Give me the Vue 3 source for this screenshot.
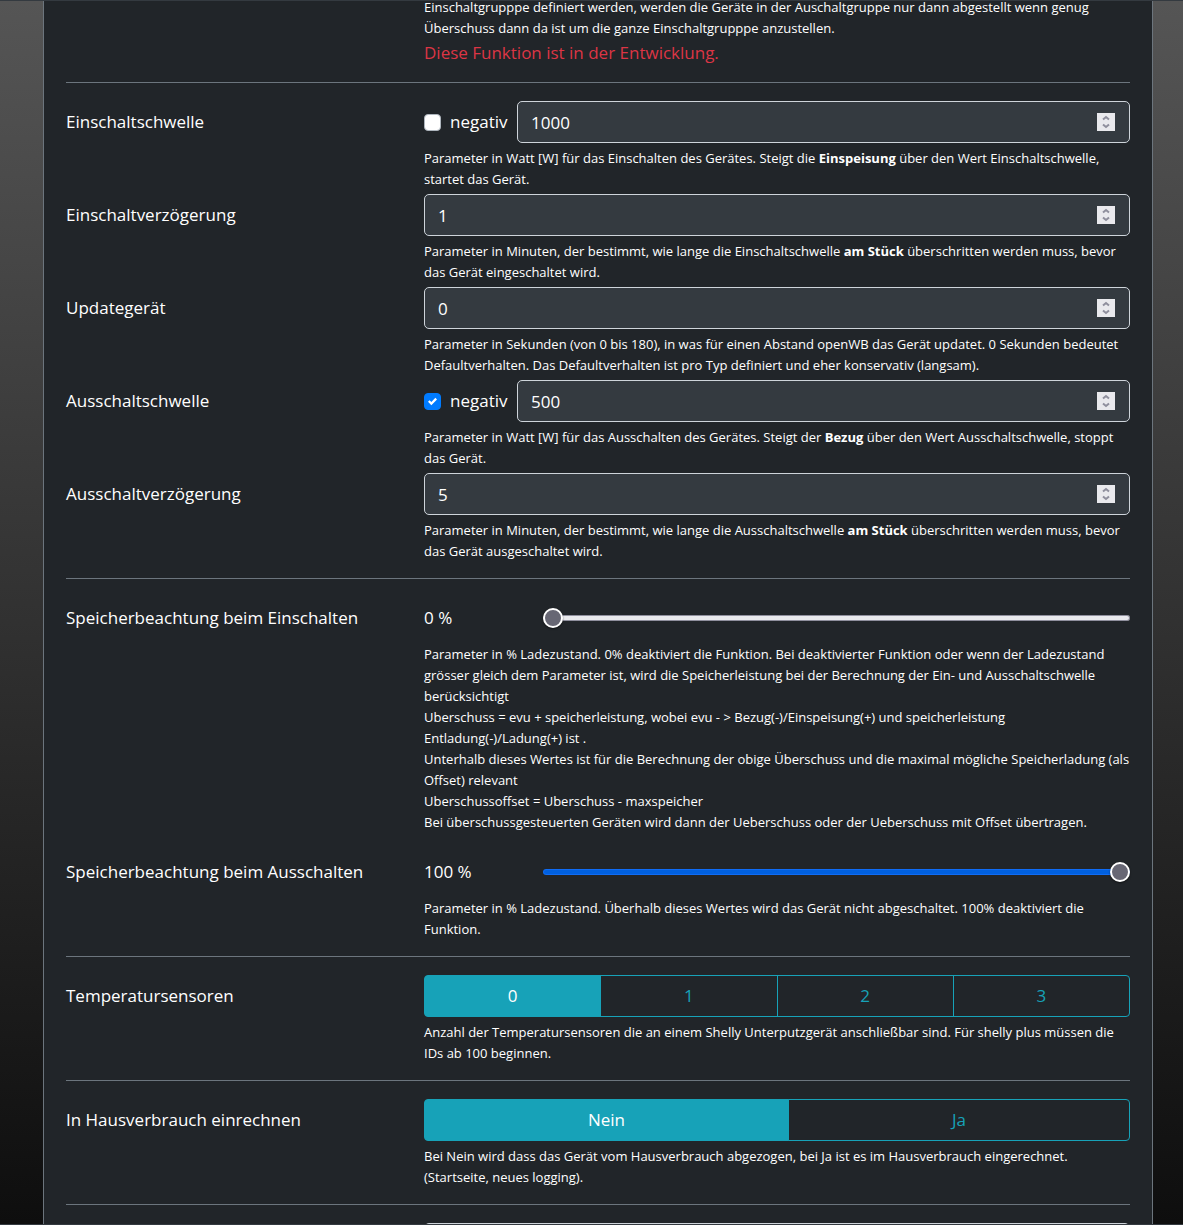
<script setup>
import { reactive } from 'vue'

const thresholds = reactive([
  {
    id: 'on-threshold', label: 'Einschaltschwelle', value: 1000, sign: true, negative: false,
    help: 'Parameter in Watt [W] für das Einschalten des Gerätes. Steigt die <b>Einspeisung</b> über den Wert Einschaltschwelle,<br>startet das Gerät.'
  },
  {
    id: 'on-delay', label: 'Einschaltverzögerung', value: 1, sign: false,
    help: 'Parameter in Minuten, der bestimmt, wie lange die Einschaltschwelle <b>am Stück</b> überschritten werden muss, bevor<br>das Gerät eingeschaltet wird.'
  },
  {
    id: 'update', label: 'Updategerät', value: 0, sign: false,
    help: 'Parameter in Sekunden (von 0 bis 180), in was für einen Abstand openWB das Gerät updatet. 0 Sekunden bedeutet<br>Defaultverhalten. Das Defaultverhalten ist pro Typ definiert und eher konservativ (langsam).'
  },
  {
    id: 'off-threshold', label: 'Ausschaltschwelle', value: 500, sign: true, negative: true,
    help: 'Parameter in Watt [W] für das Ausschalten des Gerätes. Steigt der <b>Bezug</b> über den Wert Ausschaltschwelle, stoppt<br>das Gerät.'
  },
  {
    id: 'off-delay', label: 'Ausschaltverzögerung', value: 5, sign: false,
    help: 'Parameter in Minuten, der bestimmt, wie lange die Ausschaltschwelle <b>am Stück</b> überschritten werden muss, bevor<br>das Gerät ausgeschaltet wird.'
  }
])

const storage = reactive([
  {
    id: 'soc-on', label: 'Speicherbeachtung beim Einschalten', value: 0,
    help: 'Parameter in % Ladezustand. 0% deaktiviert die Funktion. Bei deaktivierter Funktion oder wenn der Ladezustand<br>grösser gleich dem Parameter ist, wird die Speicherleistung bei der Berechnung der Ein- und Ausschaltschwelle<br>berücksichtigt<br>Uberschuss = evu + speicherleistung, wobei evu - &gt; Bezug(-)/Einspeisung(+) und speicherleistung<br>Entladung(-)/Ladung(+) ist .<br>Unterhalb dieses Wertes ist für die Berechnung der obige Überschuss und die maximal mögliche Speicherladung (als<br>Offset) relevant<br>Uberschussoffset = Uberschuss - maxspeicher<br>Bei überschussgesteuerten Geräten wird dann der Ueberschuss oder der Ueberschuss mit Offset übertragen.'
  },
  {
    id: 'soc-off', label: 'Speicherbeachtung beim Ausschalten', value: 100,
    help: 'Parameter in % Ladezustand. Überhalb dieses Wertes wird das Gerät nicht abgeschaltet. 100% deaktiviert die<br>Funktion.'
  }
])

const choices = reactive([
  {
    id: 'sensors', label: 'Temperatursensoren', options: ['0', '1', '2', '3'], selected: '0',
    help: 'Anzahl der Temperatursensoren die an einem Shelly Unterputzgerät anschließbar sind. Für shelly plus müssen die<br>IDs ab 100 beginnen.'
  },
  {
    id: 'house', label: 'In Hausverbrauch einrechnen', options: ['Nein', 'Ja'], selected: 'Nein',
    help: 'Bei Nein wird dass das Gerät vom Hausverbrauch abgezogen, bei Ja ist es im Hausverbrauch eingerechnet.<br>(Startseite, neues logging).'
  }
])
</script>

<template>
  <div class="viewport">
    <div class="page">
      <main class="card">
        <section class="section first">
          <div class="row">
            <div class="control">
              <p class="help">Einschaltgrupppe definiert werden, werden die Geräte in der Auschaltgruppe nur dann abgestellt wenn genug<br>Überschuss dann da ist um die ganze Einschaltgrupppe anzustellen.</p>
              <p class="warning">Diese Funktion ist in der Entwicklung.</p>
            </div>
          </div>
        </section>

        <section class="section">
          <div v-for="item in thresholds" :key="item.id" class="row">
            <label class="label" :for="item.id">{{ item.label }}</label>
            <div class="control">
              <div class="line">
                <label v-if="item.sign" class="sign">
                  <input v-model="item.negative" type="checkbox" class="check">
                  negativ
                </label>
                <div class="number">
                  <input :id="item.id" v-model="item.value" type="number" class="field">
                  <svg class="spinner" viewBox="0 0 18 18" aria-hidden="true">
                    <path d="M6 6.5l3-2.5 3 2.5M6 11.5l3 2.5 3-2.5" />
                  </svg>
                </div>
              </div>
              <p class="help" v-html="item.help"></p>
            </div>
          </div>
        </section>

        <section class="section spaced">
          <div v-for="item in storage" :key="item.id" class="row">
            <label class="label" :for="item.id">{{ item.label }}</label>
            <div class="control">
              <div class="line">
                <output class="percent" :for="item.id">{{ item.value }} %</output>
                <input
                  :id="item.id" v-model="item.value" type="range" min="0" max="100"
                  class="range" :class="{ full: Number(item.value) > 0 }"
                  :style="{ '--fill': item.value + '%' }"
                >
              </div>
              <p class="help" v-html="item.help"></p>
            </div>
          </div>
        </section>

        <section v-for="item in choices" :key="item.id" class="section">
          <div class="row">
            <span :id="item.id" class="label">{{ item.label }}</span>
            <div class="control">
              <div class="group" role="group" :aria-labelledby="item.id">
                <button
                  v-for="option in item.options" :key="option" type="button" class="option"
                  :class="{ active: option === item.selected }"
                  :aria-pressed="option === item.selected"
                  @click="item.selected = option"
                >{{ option }}</button>
              </div>
              <p class="help" v-html="item.help"></p>
            </div>
          </div>
        </section>

        <section class="section">
          <div class="row">
            <div class="control">
              <input type="text" class="field" aria-label="Wert">
            </div>
          </div>
        </section>
      </main>
    </div>
  </div>
</template>

<style>
body {
  margin: 0;
  background: #fff;
}
</style>

<style scoped>
* {
  box-sizing: border-box;
}

.viewport {
  height: 100vh;
  padding-right: 14px;
  overflow: hidden;
  color: #fff;
  font: 17px/26px "Segoe UI", "Open Sans", "Noto Sans", sans-serif;
}

.page {
  height: 100%;
  padding: 0 30px 0 43px;
  overflow: hidden;
  border-top: 1px solid #343a40;
  border-bottom: 1px solid #343a40;
  background: linear-gradient(#555, #0e0e0e);
}

.card {
  min-height: 100%;
  padding: 0 22px;
  border: solid #6c757d;
  border-width: 0 1px;
  background: #212529;
}

.section {
  display: flex;
  flex-direction: column;
  gap: 4px;
  padding: 18px 0 16px;
  border-bottom: 1px solid #6c757d;
}

.section.spaced {
  gap: 18px;
}

.section.first {
  margin-top: -9px;
  padding-top: 0;
}

.row {
  display: grid;
  grid-template-columns: 358px minmax(0, 1fr);
}

.label {
  line-height: 42px;
}

.control {
  grid-column: 2;
}

.line {
  display: flex;
  align-items: center;
  height: 42px;
}

.help {
  margin: 5px 0 0;
  font-size: 13px;
  line-height: 21px;
  white-space: nowrap;
}

.help :deep(b) {
  font-weight: 700;
}

.warning {
  margin: 1px 0 0;
  color: #dc3545;
}

.sign {
  display: flex;
  flex: 0 0 93px;
  align-items: center;
  gap: 9px;
}

.check {
  width: 17px;
  height: 17px;
  margin: 0;
  appearance: none;
  border: 1px solid #adb5bd;
  border-radius: 4px;
  background: #fff center / 9px 9px no-repeat;
}

.check:checked {
  border-color: #007bff;
  background-color: #007bff;
  background-image: url("data:image/svg+xml,%3csvg xmlns='http://www.w3.org/2000/svg' width='8' height='8' viewBox='0 0 8 8'%3e%3cpath fill='%23fff' d='M6.564.75l-3.59 3.612-1.538-1.55L0 4.26l2.974 2.99L8 2.193z'/%3e%3c/svg%3e");
}

.number {
  position: relative;
  flex: 1;
}

.field {
  display: block;
  width: 100%;
  height: 42px;
  padding: 0 48px 0 13px;
  appearance: textfield;
  border: 1px solid #ced4da;
  border-radius: 5px;
  background: #343a40;
  color: #fff;
  font: inherit;
}

.field::-webkit-inner-spin-button {
  appearance: none;
  margin: 0;
}

.spinner {
  position: absolute;
  top: 12px;
  right: 15px;
  width: 18px;
  height: 18px;
  background: #e9e9ed;
  fill: none;
  stroke: #8f8f9d;
  stroke-width: 2;
  pointer-events: none;
}

.percent {
  flex: 0 0 119px;
}

.range {
  flex: 1;
  min-width: 0;
  height: 20px;
  margin: 0;
  appearance: none;
  background: transparent;
}

.range::-webkit-slider-runnable-track {
  height: 6px;
  border-radius: 3px;
  background: linear-gradient(#0060df, #0060df) 0 0 / var(--fill) 100% no-repeat #e9e9ed;
  box-shadow: inset 0 0 0 1px #8f8f9d;
}

.range.full::-webkit-slider-runnable-track {
  box-shadow: inset 0 0 0 1px #0f6cf5;
}

.range::-webkit-slider-thumb {
  width: 20px;
  height: 20px;
  margin-top: -7px;
  appearance: none;
  border: 2px solid #fff;
  border-radius: 50%;
  background: #676774;
  box-shadow: 0 1px 2px #0008;
}

.group {
  display: flex;
}

.option {
  flex: 1 1 auto;
  height: 42px;
  padding: 0 13px;
  border: 1px solid #17a2b8;
  background: transparent;
  color: #17a2b8;
  font: inherit;
}

.option + .option {
  margin-left: -1px;
}

.option:first-child {
  border-radius: 4px 0 0 4px;
}

.option:last-child {
  border-radius: 0 4px 4px 0;
}

.option.active {
  background: #17a2b8;
  color: #fff;
}
</style>
